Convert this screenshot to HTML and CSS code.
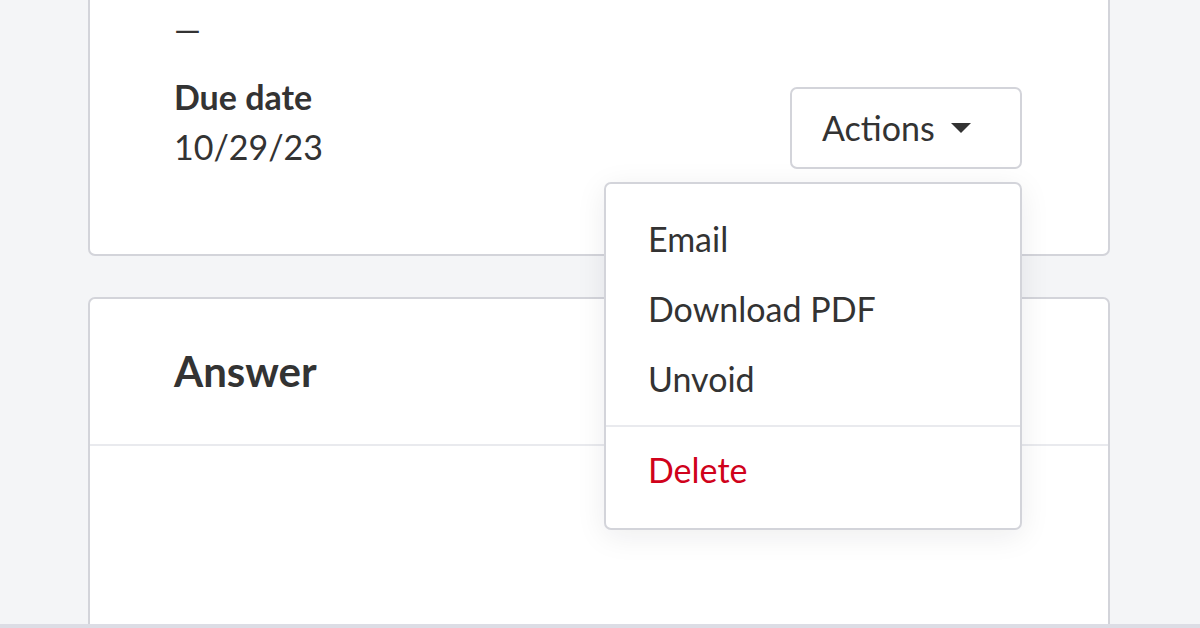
FILE: index.html
```html
<!DOCTYPE html>
<html lang="en">
<head>
<meta charset="utf-8">
<title>Invoice</title>
<link rel="stylesheet" href="styles.css">
</head>
<body>
<main class="page">
  <section class="card card-details">
    <div class="field field-top">
      <span class="value">—</span>
    </div>
    <div class="row">
      <div class="field">
        <div class="label">Due date</div>
        <div class="value">10/29/23</div>
      </div>
      <div class="actions">
        <button class="btn" type="button">
          <span>Actions</span>
          <svg class="caret" width="20" height="10" viewBox="0 0 20 10" aria-hidden="true"><path d="M0 0h20L10 10z" fill="#333"/></svg>
        </button>
        <ul class="menu">
          <li class="menu-item">Email</li>
          <li class="menu-item">Download PDF</li>
          <li class="menu-item">Unvoid</li>
          <li class="menu-sep"></li>
          <li class="menu-item danger">Delete</li>
        </ul>
      </div>
    </div>
  </section>
  <section class="card card-answer">
    <header class="card-header">
      <h2 class="title">Answer</h2>
    </header>
    <div class="card-body"></div>
  </section>
</main>
<div class="bottom-bar"></div>
</body>
</html>
```
FILE: styles.css
```css
* { box-sizing: border-box; }
html, body {
  margin: 0;
  padding: 0;
  height: 100%;
  overflow: hidden;
}
body {
  background: #f4f5f7;
  font-family: Lato, "Open Sans", sans-serif;
  font-size: 34px;
  line-height: 50px;
  color: #333333;
}
.page {
  display: flex;
  flex-direction: column;
  gap: 41px;
  padding: 0 90px 0 88px;
  margin-top: -40px;
}
.card {
  background: #ffffff;
  border: 2px solid #d3d4da;
  border-radius: 7px;
}
.card-details {
  padding: 42px 86px 82px 84px;
}
.field-top {
  margin-bottom: 18px;
}
.row {
  display: flex;
  justify-content: space-between;
  align-items: flex-start;
}
.label {
  font-weight: 700;
}
.value {
  font-weight: 400;
}
.actions {
  position: relative;
  margin-top: 15px;
}
.btn {
  display: flex;
  align-items: center;
  gap: 16px;
  height: 82px;
  width: 232px;
  padding: 0 0 0 30px;
  background: #ffffff;
  border: 2px solid #d3d4da;
  border-radius: 7px;
  font: inherit;
  color: #333333;
}
.caret {
  display: block;
}
.menu {
  position: absolute;
  right: 0;
  top: 95px;
  width: 418px;
  margin: 0;
  padding: 20px 0 23px;
  list-style: none;
  background: #ffffff;
  border: 2px solid #d3d4da;
  border-radius: 7px;
  box-shadow: 0 6px 30px rgba(20, 25, 40, 0.08);
  z-index: 5;
}
.menu-item {
  padding: 10px 42px;
  color: #333333;
}
.menu-sep {
  height: 2px;
  background: #e9eaee;
  margin: 11px 0 8px;
}
.danger {
  color: #d0021b;
}
.card-answer {
  height: 400px;
}
.card-header {
  padding: 47px 84px 48px;
  border-bottom: 2px solid #e9eaee;
}
.title {
  margin: 0;
  font-size: 42px;
  line-height: 50px;
  font-weight: 700;
}
.bottom-bar {
  position: fixed;
  left: 0;
  right: 0;
  bottom: 0;
  height: 4px;
  background: #dcdde5;
}
```
